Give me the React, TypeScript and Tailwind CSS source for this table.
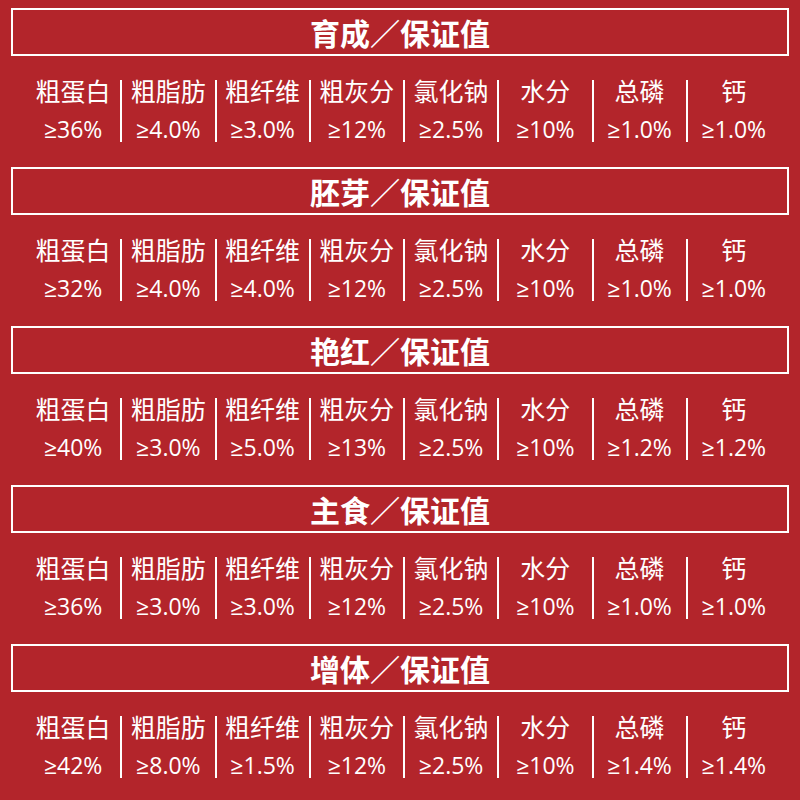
const LABELS = ["粗蛋白", "粗脂肪", "粗纤维", "粗灰分", "氯化钠", "水分", "总磷", "钙"];

const SECTIONS = [
  { title: "育成", values: ["≥36%", "≥4.0%", "≥3.0%", "≥12%", "≥2.5%", "≥10%", "≥1.0%", "≥1.0%"] },
  { title: "胚芽", values: ["≥32%", "≥4.0%", "≥4.0%", "≥12%", "≥2.5%", "≥10%", "≥1.0%", "≥1.0%"] },
  { title: "艳红", values: ["≥40%", "≥3.0%", "≥5.0%", "≥13%", "≥2.5%", "≥10%", "≥1.2%", "≥1.2%"] },
  { title: "主食", values: ["≥36%", "≥3.0%", "≥3.0%", "≥12%", "≥2.5%", "≥10%", "≥1.0%", "≥1.0%"] },
  { title: "增体", values: ["≥42%", "≥8.0%", "≥1.5%", "≥12%", "≥2.5%", "≥10%", "≥1.4%", "≥1.4%"] },
];

const Section = ({ title, values }: { title: string; values: string[] }) => (
  <section className="h-[159px]">
    {/* Title box */}
    <div className="mx-[11px] flex h-[48px] items-center justify-center border-2 border-white">
      <h2 className="font-['Noto_Sans_CJK_SC',sans-serif] text-[30px] font-bold leading-none text-white">
        {title}／保证值
      </h2>
    </div>

    {/* Figures */}
    <div className="mt-[24px] ml-[26px] mr-[20px] grid h-[62px] grid-cols-8">
      {LABELS.map((label, i) => (
        <div
          key={label}
          className={`flex flex-col items-center text-white ${i > 0 ? "border-l-2 border-white" : ""}`}
        >
          <span className="mt-[-5px] font-['Noto_Sans_CJK_SC',sans-serif] text-[25px] leading-[30px]">
            {label}
          </span>
          <span className="mt-[11px] font-['Open_Sans',sans-serif] text-[23px] leading-[26px]">
            {values[i]}
          </span>
        </div>
      ))}
    </div>
  </section>
);

export default function App() {
  return (
    <div className="h-[800px] w-[800px] overflow-hidden bg-[#b3252b] pt-[8px]">
      {SECTIONS.map((s) => (
        <Section key={s.title} title={s.title} values={s.values} />
      ))}
    </div>
  );
}
